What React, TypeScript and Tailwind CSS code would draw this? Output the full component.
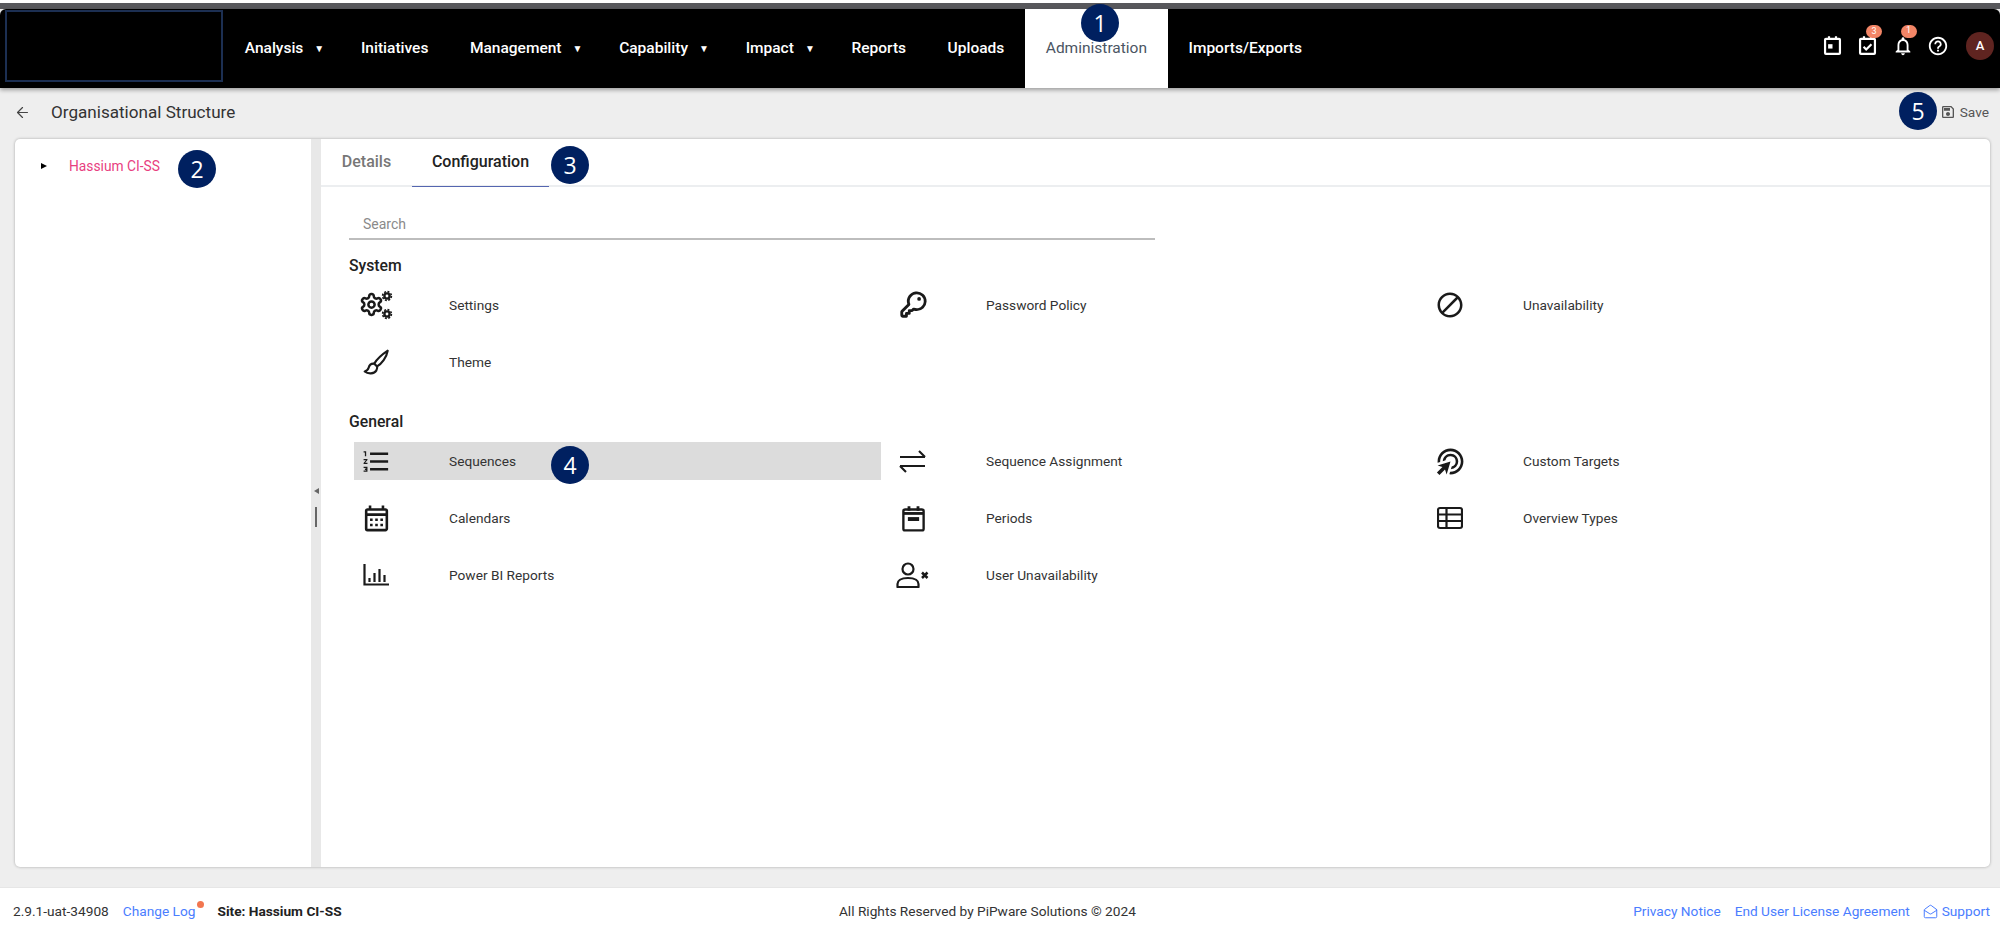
import React from "react";
import { ArrowLeft, MailOpen } from "lucide-react";
import {
  MdOutlineFormatListNumbered, MdOutlineCalendarMonth, MdOutlineBlock,
  MdOutlineAdsClick, MdOutlineNotifications, MdOutlineHelpOutline, MdOutlineSave,
} from "react-icons/md";
import { PiKeyBold } from "react-icons/pi";

const Gears = () => (
  <svg width="34" height="30" viewBox="0 0 34 30" fill="none" stroke="#1a1a1a">
    <svg x="0" y="2" width="25" height="25" viewBox="0 0 24 24" strokeWidth="2.4" strokeLinecap="round" strokeLinejoin="round">
      <path d="M12.22 2h-.44a2 2 0 0 0-2 2v.18a2 2 0 0 1-1 1.73l-.43.25a2 2 0 0 1-2 0l-.15-.08a2 2 0 0 0-2.73.73l-.22.38a2 2 0 0 0 .73 2.73l.15.1a2 2 0 0 1 1 1.72v.51a2 2 0 0 1-1 1.74l-.15.09a2 2 0 0 0-.73 2.73l.22.38a2 2 0 0 0 2.73.73l.15-.08a2 2 0 0 1 2 0l.43.25a2 2 0 0 1 1 1.73V20a2 2 0 0 0 2 2h.44a2 2 0 0 0 2-2v-.18a2 2 0 0 1 1-1.73l.43-.25a2 2 0 0 1 2 0l.15.08a2 2 0 0 0 2.73-.73l.22-.39a2 2 0 0 0-.73-2.73l-.15-.08a2 2 0 0 1-1-1.74v-.5a2 2 0 0 1 1-1.74l.15-.09a2 2 0 0 0 .73-2.73l-.22-.38a2 2 0 0 0-2.73-.73l-.15.08a2 2 0 0 1-2 0l-.43-.25a2 2 0 0 1-1-1.73V4a2 2 0 0 0-2-2z" />
      <circle cx="12" cy="12" r="3" />
    </svg>
    <circle cx="28" cy="6" r="2.6" strokeWidth="2.4" />
    <circle cx="28" cy="6" r="4.4" strokeWidth="1.6" strokeDasharray="2 1.45" />
    <circle cx="28" cy="24" r="2.6" strokeWidth="2.4" />
    <circle cx="28" cy="24" r="4.4" strokeWidth="1.6" strokeDasharray="2 1.45" />
  </svg>
);

const Brush = () => (
  <svg width="27" height="27" viewBox="0 0 24 24" fill="none" stroke="#1a1a1a" strokeWidth="1.9" strokeLinejoin="round">
    <path d="M22 1.500c-4.500 3-9.500 7.500-12 11.500l2.500 2.500c4-2.500 8.500-8 9.500-14z" />
    <path d="M9.800 13c-3-.3-4.300 1.700-4.800 3.700-.4 1.600-1.700 2.800-3.500 3.300 3 2.500 8.500 2.200 10.300-.8 1-1.600 1-3.200.6-4.700" />
  </svg>
);

const Swap = () => (
  <svg width="28" height="24" viewBox="0 0 28 24" fill="none" stroke="#1a1a1a" strokeWidth="2.1">
    <path d="M1 8h25M20 2l6 6M1 17h25M1 17l6 6" />
  </svg>
);

const PeriodIcon = ({ size = 24, color = "#1a1a1a" }: { size?: number; color?: string }) => (
  <svg width={size} height={size} viewBox="0 0 24 24" fill="none" stroke={color} strokeWidth="2.1">
    <rect x="3" y="4" width="18" height="18.500" rx="1.500" />
    <path d="M8 1v4M16 1v4" strokeWidth="2.500" />
    <path d="M3 7.500h18" strokeWidth="2.500" />
    <path d="M7 12.500h10" strokeWidth="3.500" />
  </svg>
);

const DayIcon = () => (
  <svg width="21" height="21" viewBox="0 0 24 24" fill="none" stroke="#fff" strokeWidth="2.500">
    <rect x="3.500" y="4.500" width="17" height="17" rx="1" />
    <path d="M8 1.500v4M16 1.500v4" />
    <rect x="7" y="10.500" width="5" height="5" fill="#fff" stroke="none" />
  </svg>
);

const TaskIcon = () => (
  <svg width="21" height="21" viewBox="0 0 24 24" fill="none" stroke="#fff" strokeWidth="2.500">
    <rect x="3.500" y="4.500" width="17" height="17" rx="1" />
    <path d="M8 1.500v4M16 1.500v4" />
    <path d="M7.500 13.500l3 3 6-6" />
  </svg>
);

const TableIcon = () => (
  <svg width="26" height="24" viewBox="0 0 26 24" fill="none" stroke="#1a1a1a" strokeWidth="2.200">
    <rect x="1" y="2" width="24" height="20" rx="2" />
    <path d="M1 8.500h24M1 15h24M9.500 2v20" />
  </svg>
);

const ChartIcon = () => (
  <svg width="26" height="22" viewBox="0 0 26 22" fill="none" stroke="#1a1a1a" strokeWidth="2.200">
    <path d="M1.500 0v20.500H26" />
    <path d="M6.500 14v4M11.500 9v9M16.500 5v13M21.500 11v7" />
  </svg>
);

const UserX = () => (
  <svg width="34" height="26" viewBox="0 0 34 26" fill="none" stroke="#1a1a1a" strokeWidth="2.200">
    <circle cx="12" cy="7" r="5.500" />
    <path d="M1.500 25v-3c0-3 3-6 10.500-6s10.500 3 10.500 6v3z" strokeLinejoin="round" />
    <path d="M26 10.500l5.500 5.500M31.500 10.500L26 16" strokeWidth="2.500" />
  </svg>
);

const Badge = ({ n, className }: { n: number; className: string }) => (
  <div className={"absolute w-[38px] h-[38px] rounded-full bg-[#002060] text-white flex items-center justify-center text-[23px] font-['Open_Sans',sans-serif] " + className}>
    {n}
  </div>
);

const Caret = () => <span className="ml-[11px] mr-[-4.75px] text-[10px] leading-none">▼</span>;

const NavItem = ({ label, caret, active }: { label: string; caret?: boolean; active?: boolean }) => (
  <div className={"h-full flex items-center px-[20.75px] text-[15.5px] " + (active ? "bg-white text-[#4b5563] font-normal" : "text-white font-medium")}>
    {label}
    {caret && <Caret />}
  </div>
);

const NotifBadge = ({ n }: { n: number }) => (
  <span className="absolute -top-[10px] left-[9px] w-[16px] h-[13px] rounded-full bg-[#f28566] text-white text-[9px] flex items-center justify-center">{n}</span>
);

const Item = ({ icon, label, active }: { icon: React.ReactNode; label: string; active?: boolean }) => (
  <div className={"h-[38px] flex items-center text-[13.7px] text-[#333] " + (active ? "bg-[#dcdcdc]" : "")}>
    <div className="w-[44px] flex justify-center shrink-0">{icon}</div>
    <span className="ml-[51px]">{label}</span>
  </div>
);

const ic = "#1a1a1a";

export default function App() {
  return (
    <div className="relative w-[2000px] h-[933px] flex flex-col bg-[#eeeeee] overflow-hidden font-['Roboto',sans-serif]">
      <div className="h-[3px] bg-white shrink-0" />
      <div className="h-[6px] bg-[#58585c] shrink-0" />
      <header className="h-[79px] shrink-0 bg-black flex items-center rounded-tl-[6px] rounded-tr-[6px] shadow-[0_2px_4px_rgba(0,0,0,0.35)] z-10">
        <div className="w-[218px] h-[72px] ml-[5px] mb-[6px] border-2 border-[#1c2f52] shrink-0" />
        <nav className="h-full flex ml-[1px]">
          <NavItem label="Analysis" caret />
          <NavItem label="Initiatives" />
          <NavItem label="Management" caret />
          <NavItem label="Capability" caret />
          <NavItem label="Impact" caret />
          <NavItem label="Reports" />
          <NavItem label="Uploads" />
          <NavItem label="Administration" active />
          <NavItem label="Imports/Exports" />
        </nav>
        <div className="ml-auto flex items-center mr-[6px] mb-[6px]">
          <div className="w-[35px] flex justify-center"><DayIcon /></div>
          <div className="w-[35px] flex justify-center"><div className="relative flex"><TaskIcon /><NotifBadge n={3} /></div></div>
          <div className="w-[35px] flex justify-center"><div className="relative flex"><MdOutlineNotifications size={22} color="#fff" /><NotifBadge n={1} /></div></div>
          <div className="w-[35px] flex justify-center"><MdOutlineHelpOutline size={22} color="#fff" /></div>
          <div className="ml-[11px] w-[28px] h-[28px] rounded-full bg-[#5f2420] text-white text-[13px] font-medium flex items-center justify-center">A</div>
        </div>
      </header>

      <div className="h-[51px] shrink-0 flex items-center pl-[14px] pr-[11px] pb-[2px]">
        <ArrowLeft size={17} color="#444" strokeWidth={1.7} />
        <h1 className="ml-[20px] text-[17.1px] font-normal text-[#333]">Organisational Structure</h1>
        <div className="ml-auto flex items-center gap-[4px] text-[13.7px] text-[#555]">
          <MdOutlineSave size={16} />
          Save
        </div>
      </div>

      <main className="flex-1 min-h-0 ml-[15px] mr-[10px] flex bg-white rounded-[5px] shadow-[0_0_3px_rgba(0,0,0,0.3)]">
        <aside className="w-[296px] shrink-0 pt-[20px] pl-[26px] flex items-start">
          <div className="flex items-center h-[14px]">
            <span className="w-0 h-0 border-y-[3.5px] border-y-transparent border-l-[6px] border-l-black" />
            <span className="ml-[22px] text-[13.8px] text-[#e8407f]">Hassium CI-SS</span>
          </div>
        </aside>
        <div className="w-[10px] shrink-0 bg-[#e8e8e8] flex flex-col items-center pt-[349px]">
          <span className="w-0 h-0 border-y-[3.5px] border-y-transparent border-r-[5px] border-r-[#666]" />
          <span className="mt-[13px] w-[2px] h-[20px] bg-[#666]" />
        </div>
        <section className="flex-1 min-w-0 flex flex-col">
          <div className="h-[48px] shrink-0 border-b-2 border-[#eceef0] flex text-[16px] font-medium">
            <div className="w-[91px] h-[48px] flex items-center justify-center pb-[2px] text-[#777]">Details</div>
            <div className="w-[137px] h-[48px] flex items-center justify-center pb-[2px] text-[#222] border-b-[1.5px] border-[#5566b0]">Configuration</div>
          </div>
          <div className="pl-[28px]">
            <div className="mt-[17px] w-[806px] h-[36px] border-b-2 border-[#bdbdbd] flex items-end pl-[14px] pb-[3px] text-[14px] text-[#8a8a8a]">Search</div>
            <h2 className="mt-[17px] text-[15.75px] leading-[18px] font-medium text-[#222]">System</h2>
            <div className="mt-[11px] grid grid-cols-[527px_527px_527px] gap-x-[10px] gap-y-[19px] pl-[5px]">
              <Item icon={<Gears />} label="Settings" />
              <Item icon={<PiKeyBold size={30} color={ic} />} label="Password Policy" />
              <Item icon={<MdOutlineBlock size={30} color={ic} />} label="Unavailability" />
              <Item icon={<Brush />} label="Theme" />
            </div>
            <h2 className="mt-[32px] text-[15.75px] leading-[18px] font-medium text-[#222]">General</h2>
            <div className="mt-[11px] grid grid-cols-[527px_527px_527px] gap-x-[10px] gap-y-[19px] pl-[5px]">
              <Item icon={<MdOutlineFormatListNumbered size={31} color={ic} />} label="Sequences" active />
              <Item icon={<Swap />} label="Sequence Assignment" />
              <Item icon={<MdOutlineAdsClick size={31} color={ic} style={{ transform: "scaleX(-1)" }} />} label="Custom Targets" />
              <Item icon={<MdOutlineCalendarMonth size={31} color={ic} />} label="Calendars" />
              <Item icon={<PeriodIcon size={27} />} label="Periods" />
              <Item icon={<TableIcon />} label="Overview Types" />
              <Item icon={<ChartIcon />} label="Power BI Reports" />
              <Item icon={<UserX />} label="User Unavailability" />
            </div>
          </div>
        </section>
      </main>

      <div className="h-[20px] shrink-0" />
      <footer className="h-[46px] shrink-0 bg-white border-t border-[#e6e6e6] flex items-center pl-[13px] pr-[10px] pt-[2px] text-[13.7px] text-[#333]">
        <span>2.9.1-uat-34908</span>
        <span className="ml-[14px] text-[#4a7dff] relative">
          Change Log
          <span className="absolute -right-[9px] top-[0px] w-[7px] h-[7px] rounded-full bg-[#f2764f]" />
        </span>
        <span className="ml-[22px] font-bold text-[#222]">Site: Hassium CI-SS</span>
        <span className="flex-1 text-center">All Rights Reserved by PiPware Solutions © 2024</span>
        <span className="text-[#4a7dff]">Privacy Notice</span>
        <span className="ml-[14px] text-[#4a7dff]">End User License Agreement</span>
        <span className="ml-[13px] text-[#4a7dff] flex items-center gap-[4px]"><MailOpen size={15} strokeWidth={1.6} />Support</span>
      </footer>

      <Badge n={1} className="left-[1081px] top-[4px] z-20" />
      <Badge n={2} className="left-[178px] top-[150px] z-20" />
      <Badge n={3} className="left-[551px] top-[146px] z-20" />
      <Badge n={4} className="left-[551px] top-[446px] z-20" />
      <Badge n={5} className="left-[1899px] top-[92px] z-20" />
    </div>
  );
}
